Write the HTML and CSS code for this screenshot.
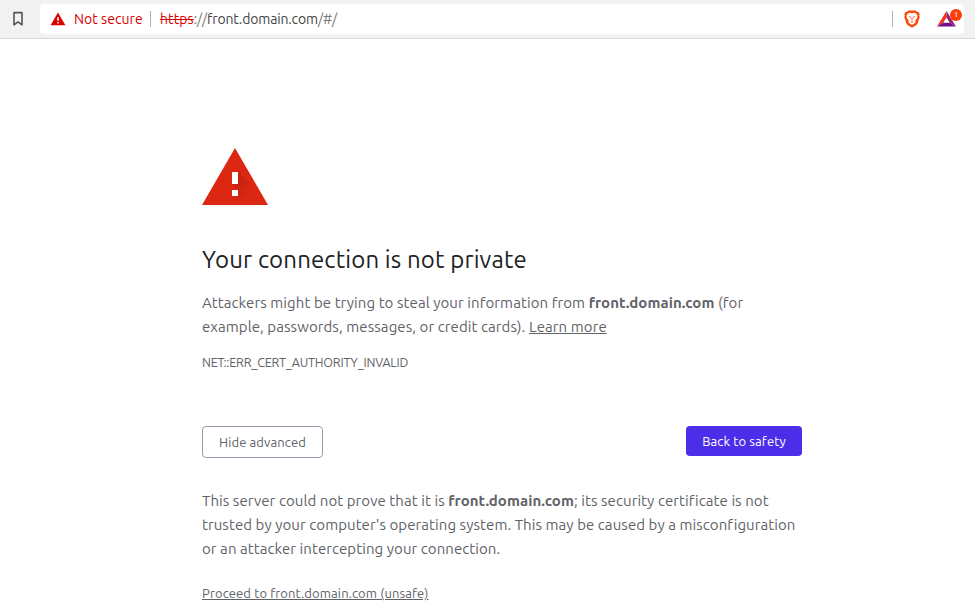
FILE: index.html
```html
<!DOCTYPE html>
<html lang="en">
<head>
<meta charset="utf-8">
<title>Privacy error</title>
<link rel="stylesheet" href="styles.css">
</head>
<body>
<header class="toolbar">
  <svg class="bookmark" width="12" height="16" viewBox="0 0 12 16"><path d="M2 1.6h8v12.2L6 10.9l-4 2.9z" fill="none" stroke="#555" stroke-width="1.6" stroke-linejoin="round"/></svg>
  <div class="address">
    <svg class="alert" width="16" height="14" viewBox="0 0 16 14"><path d="M8 .6 15.4 13.2H.6z" fill="#d90000"/><path d="M7.2 5.2h1.6v3.6H7.2zM7.2 10h1.6v1.6H7.2z" fill="#fff"/></svg>
    <span class="not-secure">Not secure</span>
    <i class="rule"></i>
    <span class="url"><s>https</s><span class="dim">://</span>front.domain.com<span class="dim">/#/</span></span>
    <i class="rule rule-end"></i>
    <svg class="lion" width="16" height="18" viewBox="0 0 16 18"><path d="M4.3.5h7.4l1.4 1.6 1.5-.1 1.1 2.2-.5 1.5.5 1.2-2 6.6-1.2 1.6L8 17.8l-4.5-2.7-1.2-1.6-2-6.6.5-1.2-.5-1.5L1.4 2l1.5.1z" fill="#fb4a0b"/><path d="M4.7 2.8 8 3.3l3.3-.5 2.3 2.6-.4 1.4.1.9-2.2 3.2.4 1.6L8 15l-3.5-2.5.4-1.6-2.2-3.2.1-.9-.4-1.4z" fill="#fff"/><path d="m4.2 6 2.8.8-.5 1.1zM11.8 6l-2.8.8.5 1.1zM7.7 7.5h.6l.3 2.3-.6.6-.6-.6zM6.3 11.7l1.7-.5 1.7.5-1.7 1z" fill="#fb4a0b"/></svg>
    <div class="rewards">
      <svg width="19" height="16" viewBox="0 0 19 16"><path d="M9.5 0 0 15.5l6.200-3.800L9.500 6.500z" fill="#f5331a"/><path d="m9.500 0 9.500 15.500-6.200-3.800-3.300-5.200z" fill="#9e1f63"/><path d="M0 15.500h19l-6.200-3.800H6.200z" fill="#70108f"/></svg>
      <span class="badge">1</span>
    </div>
  </div>
</header>
<main class="warning">
  <svg class="triangle" width="66" height="57" viewBox="0 0 66 57">
    <defs><linearGradient id="shade" gradientUnits="userSpaceOnUse" x1="34" y1="30" x2="50" y2="46"><stop offset="0" stop-color="#b51d0c" stop-opacity=".65"/><stop offset="1" stop-color="#b51d0c" stop-opacity="0"/></linearGradient></defs>
    <path d="M33 0 66 57H0z" fill="#dc2813"/><path d="m36 24 21 21 9 12H39l-9-9 6-6-6-6z" fill="url(#shade)"/><path d="M30 24h6v12h-6zM30 42h6v6h-6z" fill="#fff"/></svg>
  <h1>Your connection is not private</h1>
  <p class="body">Attackers might be trying to steal your information from <b>front.domain.com</b> (for example, passwords, messages, or credit cards). <a href="#">Learn more</a></p>
  <p class="code">NET::ERR_CERT_AUTHORITY_INVALID</p>
  <div class="actions">
    <button class="secondary">Hide advanced</button>
    <button class="primary">Back to safety</button>
  </div>
  <p class="body details">This server could not prove that it is <b>front.domain.com</b>; its security certificate is not trusted by your computer's operating system. This may be caused by a misconfiguration or an attacker intercepting your connection.</p>
  <p class="proceed"><a href="#">Proceed to front.domain.com (unsafe)</a></p>
</main>
</body>
</html>
```
FILE: styles.css
```css
* { box-sizing: border-box; }
body { margin: 0; height: 612px; overflow: hidden; background: #fff; color: #5f6368; font-family: Ubuntu, "Noto Sans", sans-serif; }
.toolbar { display: flex; align-items: center; height: 39px; padding: 0 11px 0 12px; background: #f2f2f2; border-bottom: 1px solid #d6d5dc; }
.bookmark { flex: none; margin-right: 16px; }
.address { flex: 1; display: flex; align-items: center; height: 30px; padding: 0 2px 0 10px; background: #fff; border-radius: 4px; font-size: 14px; white-space: nowrap; }
.alert { margin-right: 8px; }
.not-secure { color: #d90000; width: 69px; letter-spacing: .05px; }
.rule { width: 1px; height: 16px; margin: 0 9px 0 7px; background: #b0b0b0; }
.url { color: #444; letter-spacing: -.14px; }
.url s { color: #d90000; letter-spacing: .1px; }
.dim { color: #777; }
.rule-end { margin: 0 11px 0 auto; }
.lion { margin-right: 17px; }
.rewards { position: relative; width: 25px; height: 16px; }
.rewards svg { display: block; }
.badge { position: absolute; top: -2px; left: 13px; width: 12px; height: 12px; border-radius: 6px; background: #fb3f0b; color: #fff; font-size: 8px; line-height: 12px; text-align: center; }
.warning { width: 600px; margin: 109px 0 0 202px; }
.triangle { display: block; }
h1 { margin: 39px 0 15px; font-size: 24px; font-weight: 400; line-height: 32px; letter-spacing: .14px; color: #202124; }
.body { width: 598px; margin: 0; font-size: 15px; line-height: 24px; letter-spacing: .085px; }
a { color: inherit; }
.code { margin: 11px 0 0; font-size: 12.5px; line-height: 24px; letter-spacing: -.19px; }
.actions { display: flex; justify-content: space-between; align-items: flex-start; margin-top: 52px; }
button { padding: 0; border-radius: 4px; font: 13px Ubuntu, "Noto Sans", sans-serif; letter-spacing: .12px; white-space: nowrap; }
.secondary { width: 121px; height: 32px; border: 1px solid #9a9aac; background: #fff; color: #5f6368; }
.primary { width: 116px; height: 30px; border: 0; background: #4c2eea; color: #fff; }
.details { margin-top: 31px; letter-spacing: .075px; }
.proceed { margin: 20px 0 0; font-size: 13px; line-height: 24px; letter-spacing: .12px; }
```
